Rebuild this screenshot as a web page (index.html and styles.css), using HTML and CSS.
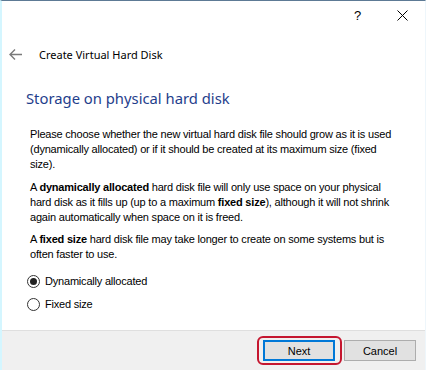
FILE: index.html
```html
<!DOCTYPE html>
<html>
<head>
<meta charset="utf-8">
<link rel="stylesheet" href="styles.css">
</head>
<body>
<div class="window">
  <div class="titlebar">
    <div class="tbtn help">?</div>
    <div class="tbtn close">
      <svg width="11" height="11" viewBox="0 0 11 11"><path d="M0.5 0.5 L10.5 10.5 M10.5 0.5 L0.5 10.5" stroke="#000" stroke-width="1" fill="none"/></svg>
    </div>
  </div>
  <div class="header">
    <svg class="back" width="13" height="11" viewBox="0 0 13 11"><path d="M6 0.5 L1 5.5 L6 10.5 M1 5.5 H13" stroke="#7a7a7a" stroke-width="1.4" fill="none"/></svg>
    <span class="htitle">Create Virtual Hard Disk</span>
  </div>
  <div class="content">
    <h1 class="instr">Storage on physical hard disk</h1>
    <p class="para">Please choose whether the new virtual hard disk file should grow as it is used<br>(dynamically allocated) or if it should be created at its maximum size (fixed<br>size).</p>
    <p class="para">A <b>dynamically allocated</b> hard disk file will only use space on your physical<br>hard disk as it fills up (up to a maximum <b>fixed size</b>), although it will not shrink<br>again automatically when space on it is freed.</p>
    <p class="para">A <b>fixed size</b> hard disk file may take longer to create on some systems but is<br>often faster to use.</p>
    <div class="radios">
      <div class="radio"><span class="circle on"></span><span>Dynamically allocated</span></div>
      <div class="radio"><span class="circle"></span><span>Fixed size</span></div>
    </div>
  </div>
  <div class="footer">
    <div class="btnwrap">
      <div class="btn default">Next</div>
      <div class="ring"></div>
    </div>
    <div class="btn">Cancel</div>
  </div>
</div>
</body>
</html>
```
FILE: styles.css
```css
* { box-sizing: border-box; }
html, body { margin: 0; padding: 0; background: #fff; }
.window {
  width: 426px;
  height: 370px;
  display: flex;
  flex-direction: column;
  border-top: 1px solid #5d7a95;
  border-left: 2px solid #d4f6ff;
  border-right: 1px solid #eef6fb;
  background: #fff;
  font-family: "Liberation Sans", Arial, sans-serif;
  color: #000;
}
.titlebar {
  height: 29px;
  display: flex;
  justify-content: flex-end;
}
.tbtn {
  width: 45px;
  height: 29px;
  display: flex;
  align-items: center;
  justify-content: center;
  font-size: 14px;
}
.help { font-family: "Liberation Sans", sans-serif; font-size: 13px; }
.header {
  height: 48px;
  display: flex;
  align-items: center;
  padding-left: 7px;
}
.back { margin-right: 17px; }
.htitle {
  font-family: "Noto Sans", sans-serif;
  font-size: 11px;
  color: #000;
}
.content {
  flex: 1;
  padding-left: 24px;
}
.instr {
  margin: 9px 0 18px 0;
  font-family: "Noto Sans", sans-serif;
  font-weight: normal;
  font-size: 14.8px;
  line-height: 22px;
  color: #1f3e8c;
}
.para {
  margin: 0 0 7.5px 4px;
  font-size: 11px;
  line-height: 15px;
  white-space: nowrap;
  letter-spacing: -0.2px;
}
.para b { font-weight: bold; }
.radios { margin-left: 1px; margin-top: 0; }
.radio {
  display: flex;
  align-items: center;
  height: 23px;
  font-size: 11px;
  letter-spacing: -0.2px;
}
.circle {
  width: 13px;
  height: 13px;
  border: 1px solid #333;
  border-radius: 50%;
  margin-right: 5px;
  display: flex;
  align-items: center;
  justify-content: center;
}
.circle.on::after {
  content: "";
  width: 7px;
  height: 7px;
  border-radius: 50%;
  background: #222;
}
.footer {
  height: 40px;
  background: #f0f0f0;
  border-top: 1px solid #dfdfdf;
  display: flex;
  justify-content: flex-end;
  align-items: flex-start;
  padding: 9px 9px 0 0;
  gap: 9px;
}
.btnwrap { position: relative; }
.btn {
  width: 72px;
  height: 21px;
  background: #e1e1e1;
  border: 1px solid #adadad;
  font-size: 11px;
  display: flex;
  align-items: center;
  justify-content: center;
}
.btn.default { border: 2px solid #0078d7; }
.ring {
  position: absolute;
  left: -6px;
  top: -4px;
  right: -7px;
  bottom: -4px;
  border: 2.5px solid #c5162f;
  border-radius: 6px;
}
```
